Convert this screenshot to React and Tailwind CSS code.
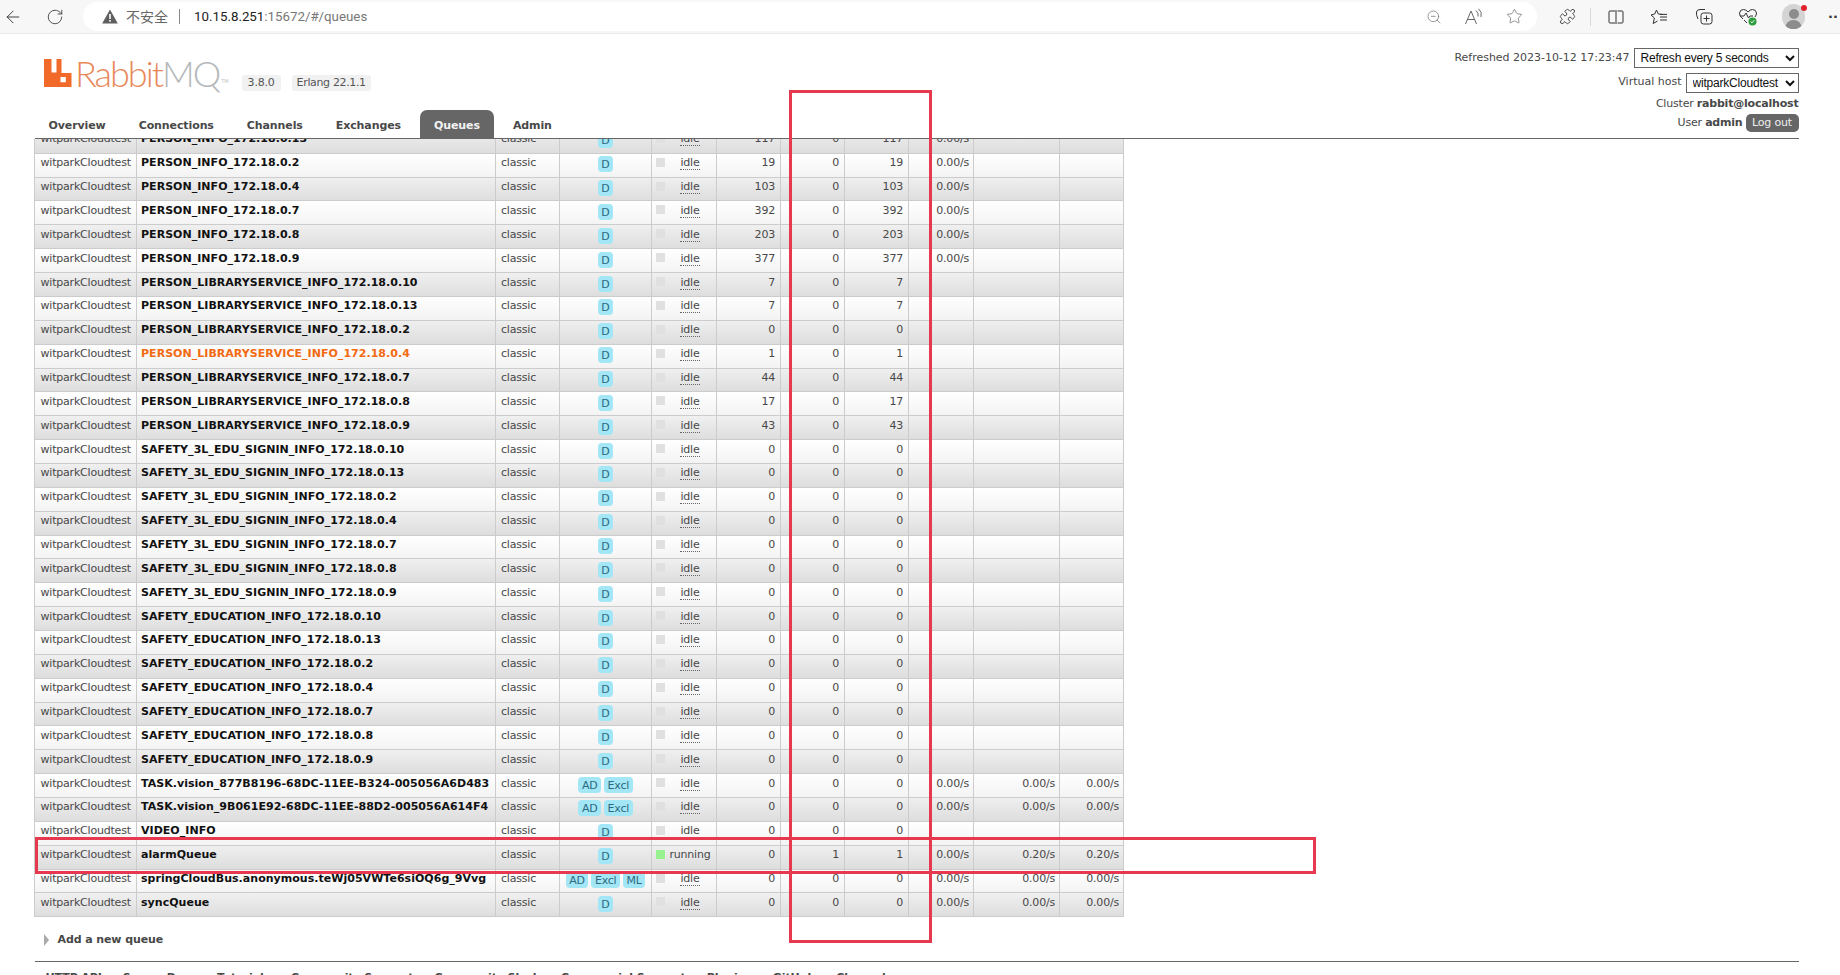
import React from "react";
import { ArrowLeft, RotateCw, ZoomOut, Star, Puzzle } from "lucide-react";

const P = "PERSON_INFO_172.18.0.";
const L = "PERSON_LIBRARYSERVICE_INFO_172.18.0.";
const S = "SAFETY_3L_EDU_SIGNIN_INFO_172.18.0.";
const E = "SAFETY_EDUCATION_INFO_172.18.0.";
const suf = ["10", "13", "2", "4", "7", "8", "9"];
const zero = (prefix) => suf.map((s) => ({ n: prefix + s, r: 0, u: 0, t: 0 }));
const libVals = [7, 7, 0, 1, 44, 17, 43];

const rate = ["0.00/s", "0.00/s", "0.00/s"];
const rows = [
  { n: P + "13", r: 117, u: 0, t: 117, a: ["0.00/s"] },
  { n: P + "2", r: 19, u: 0, t: 19, a: ["0.00/s"] },
  { n: P + "4", r: 103, u: 0, t: 103, a: ["0.00/s"] },
  { n: P + "7", r: 392, u: 0, t: 392, a: ["0.00/s"] },
  { n: P + "8", r: 203, u: 0, t: 203, a: ["0.00/s"] },
  { n: P + "9", r: 377, u: 0, t: 377, a: ["0.00/s"] },
  ...suf.map((s, i) => ({ n: L + s, r: libVals[i], u: 0, t: libVals[i], orange: s === "4" })),
  ...zero(S),
  ...zero(E),
  { n: "TASK.vision_877B8196-68DC-11EE-B324-005056A6D483", r: 0, u: 0, t: 0, f: ["AD", "Excl"], a: rate },
  { n: "TASK.vision_9B061E92-68DC-11EE-88D2-005056A614F4", r: 0, u: 0, t: 0, f: ["AD", "Excl"], a: rate },
  { n: "VIDEO_INFO", r: 0, u: 0, t: 0 },
  { n: "alarmQueue", r: 0, u: 1, t: 1, run: true, a: ["0.00/s", "0.20/s", "0.20/s"] },
  { n: "springCloudBus.anonymous.teWj05VWTe6siOQ6g_9Vvg", r: 0, u: 0, t: 0, f: ["AD", "Excl", "ML"], a: rate },
  { n: "syncQueue", r: 0, u: 0, t: 0, a: rate },
];

const tabs = ["Overview", "Connections", "Channels", "Exchanges", "Queues", "Admin"];
const foot = ["HTTP API", "Server Docs", "Tutorials", "Community Support", "Community Slack", "Commercial Support", "Plugins", "GitHub", "Changelog"];
const widths = [102, 359, 64, 92, 65, 64, 64, 64, 65, 86, 64];

const td = "border border-[#cccccc] align-top pt-[1.5px] leading-[15px] overflow-hidden whitespace-nowrap";

function Row({ q, i }) {
  const gray = i % 2 === 0;
  const a = q.a || [];
  return (
    <tr className={gray ? "h-[23.87px] bg-linear-to-b from-[#f0f0f0] to-[#dddddd]" : "h-[23.87px] bg-linear-to-b from-[#ffffff] to-[#f3f3f3]"}>
      <td className={td + " pl-[5.5px]"}>witparkCloudtest</td>
      <td className={td + " pl-[4px] font-bold tracking-[0.03px] " + (q.orange ? "text-[#f26a12]" : "text-[#111111]")}>{q.n}</td>
      <td className={td + " pl-[5px]"}>classic</td>
      <td className={td + " text-center"}>
        <div className="flex justify-center gap-[3px] pt-[1px]">
          {(q.f || ["D"]).map((f) => (
            <span key={f} className="rounded-[4px] bg-[#a3e6f6] px-[3.5px] h-[16px] leading-[17px] text-[#2d6a80]">{f}</span>
          ))}
        </div>
      </td>
      <td className={td}>
        <div className="flex items-start pl-[4px]">
          <span className={q.run ? "mt-[2.5px] w-[9px] h-[9px] bg-[#97f28f]" : "mt-[2.5px] w-[9px] h-[9px] bg-[#e0e0e0]"} />
          <span className="flex-1 text-center pr-[1px]">
            {q.run ? "running" : <span className="border-b border-dotted border-[#666666]">idle</span>}
          </span>
        </div>
      </td>
      <td className={td + " text-right pr-[5px]"}>{q.r}</td>
      <td className={td + " text-right pr-[5px]"}>{q.u}</td>
      <td className={td + " text-right pr-[5px]"}>{q.t}</td>
      <td className={td + " text-right pr-[4px]"}>{a[0]}</td>
      <td className={td + " text-right pr-[4px]"}>{a[1]}</td>
      <td className={td + " text-right pr-[4px]"}>{a[2]}</td>
    </tr>
  );
}

function Slot({ children, w = "w-[40px]" }) {
  return <div className={"flex items-center justify-center " + w}>{children}</div>;
}

function BrowserBar() {
  return (
    <div className="relative h-[34px] bg-[#f7f7f7] border-b border-[#ebebeb] flex items-center text-[#333333] tracking-normal">
      <Slot w="w-[25px]"><ArrowLeft size={20} strokeWidth={1.1} /></Slot>
      <Slot w="w-[36px] ml-[12px]"><RotateCw size={18} strokeWidth={1.1} /></Slot>
      <div className="ml-[10px] w-[1454px] h-[29px] bg-white rounded-full flex items-center pl-[19px] font-['Roboto',sans-serif]">
        <svg width="16" height="15" viewBox="0 0 16 15" className="shrink-0">
          <path d="M8 0.5 L15.8 14.5 H0.2 Z" fill="#5f5f5f" />
          <rect x="7.2" y="5" width="1.6" height="5" fill="#fff" />
          <rect x="7.2" y="11" width="1.6" height="1.7" fill="#fff" />
        </svg>
        <span className="ml-[8px] text-[14px] text-[#666666] font-['Noto_Sans_CJK_SC',sans-serif]">不安全</span>
        <span className="ml-[11px] w-px h-[15px] bg-[#888888]" />
        <span className="ml-[14px] text-[13.3px] text-[#222222]">10.15.8.251<span className="text-[#777777]">:15672/#/queues</span></span>
        <div className="ml-auto flex items-center pr-[3px] text-[#666666]">
          <Slot><ZoomOut size={16} strokeWidth={1} /></Slot>
          <Slot>
            <svg width="20" height="18" viewBox="0 0 20 18" fill="none" stroke="#666" strokeWidth="1">
              <path d="M1.5 16 L7 3 L12.5 16 M3.3 11.5 H10.7" />
              <path d="M12 2.5 Q15 5 14 8.5 M14.5 0.8 Q18.5 4 17 9" />
            </svg>
          </Slot>
          <Slot><Star size={17} strokeWidth={1} /></Slot>
        </div>
      </div>
      <div className="flex items-center ml-[11px] text-[#333333]">
        <Slot w="w-[38px]"><Puzzle size={17} strokeWidth={1.2} /></Slot>
        <span className="w-px h-[18px] bg-[#d8d8d8] mx-[4px]" />
        <Slot w="w-[42px]">
          <svg width="16" height="14" viewBox="0 0 16 14" fill="none" stroke="#333" strokeWidth="1">
            <path d="M7 1 H2 Q1 1 1 2 V12 Q1 13 2 13 H7 M9.5 1 H14 Q15 1 15 2 V12 Q15 13 14 13 H9.5 M8 0 V14" />
          </svg>
        </Slot>
        <Slot w="w-[44px]">
          <svg width="18" height="16" viewBox="0 0 18 16" fill="none" stroke="#333" strokeWidth="1">
            <path d="M6.5 1 L8.3 5 L12.5 5.4 M1 6 L4.4 9 L3.2 14.5 L7.5 12" />
            <path d="M6.5 1 L4.7 5 L1 6 M10 8 H17 M10 11 H17 M10 5.4 H17" />
          </svg>
        </Slot>
        <Slot w="w-[46px]">
          <svg width="18" height="17" viewBox="0 0 18 17" fill="none" stroke="#333" strokeWidth="1">
            <path d="M3 11 Q1 7 1.5 4 Q2 1.5 5 1.5 H10" />
            <rect x="6" y="5" width="11" height="11" rx="2.5" />
            <path d="M11.5 7.5 V13.5 M8.5 10.5 H14.5" />
          </svg>
        </Slot>
        <Slot w="w-[42px]">
          <svg width="20" height="18" viewBox="0 0 20 18" fill="none" stroke="#333" strokeWidth="1">
            <path d="M5 11 Q1 8 1.5 5 Q2 1.5 5.5 1.5 Q8 1.5 10 4 Q12 1.5 14.5 1.5 Q18 1.5 18.5 5 Q18.5 7 17 9" />
            <path d="M2 8 H6 L8 5 L10.5 10 L12 8 H15" />
            <path d="M6 12 L9 15" />
            <circle cx="14.5" cy="13.5" r="4" fill="#2e9e3f" stroke="none" />
            <path d="M12.7 13.5 L14 14.8 L16.3 12.3" stroke="#fff" />
          </svg>
        </Slot>
        <div className="ml-[13px] w-[23px] h-[25px] rounded-full bg-[#d4d4d4] overflow-hidden flex flex-col items-center pt-[5px]">
          <span className="w-[10px] h-[10px] rounded-full bg-[#8c8c8c]" />
          <span className="mt-[1px] w-[17px] h-[10px] rounded-t-full bg-[#8c8c8c]" />
        </div>
        <span className="absolute top-[4.5px] left-[1800.5px] w-[6px] h-[6px] rounded-full bg-[#e0202a]" />
        <span className="ml-[23px] text-[13px] font-bold text-[#333333] leading-none whitespace-nowrap">··</span>
      </div>
    </div>
  );
}

function Logo() {
  return (
    <div className="flex items-start tracking-normal">
      <svg width="28" height="28" viewBox="0 0 28 28" className="shrink-0 mt-[2px]">
        <path fillRule="evenodd" d="M0 0 H7.5 V13.5 H12.5 V0 H17.5 V14 H27.5 V28.5 H0 Z M16.5 18 V23.2 H21.8 V18 Z" fill="#f26a2a" />
      </svg>
      <div className="ml-[3px] -mt-[2px] h-[36px] leading-[36px] text-[36px] font-light tracking-[-2px] font-['Lato',sans-serif] text-[#e8885a] whitespace-nowrap">
        Rabbit<span className="text-[#b4b8bb]">MQ</span>
      </div>
      <span className="mt-[21px] ml-[2px] text-[5px] text-[#c0c0c0]">TM</span>
      <div className="mt-[18px] ml-[13px] flex gap-[11px] text-[#555555]">
        <span className="h-[16px] leading-[16px] px-[6px] bg-[#f1f1f1] rounded-[3px] tracking-[-0.2px]">3.8.0</span>
        <span className="h-[16px] leading-[16px] px-[5px] bg-[#f1f1f1] rounded-[3px] tracking-[-0.35px]">Erlang 22.1.1</span>
      </div>
    </div>
  );
}

export default function App() {
  return (
    <div className="relative w-[1840px] h-[975px] overflow-hidden bg-white text-[#484848] text-[11px] tracking-[-0.2px] font-['DejaVu_Sans',sans-serif]">
      <BrowserBar />
      <header className="ml-[34.5px] mr-[41.5px] h-[104.5px] border-b border-[#666666] flex justify-between">
        <div className="flex flex-col justify-between">
          <div className="pt-[23px] pl-[9.5px]"><Logo /></div>
          <nav className="flex gap-[5px] font-bold text-[#484848] tracking-[-0.1px]">
            {tabs.map((t) => (
              <span key={t} className={t === "Queues" ? "h-[28px] px-[14px] pt-[8px] leading-[15px] bg-[#666666] text-[#f2f2f2] rounded-t-[7px]" : "h-[28px] px-[14px] pt-[8px] leading-[15px]"}>{t}</span>
            ))}
          </nav>
        </div>
        <div className="flex flex-col items-end pt-[14px]">
          <div className="flex items-center gap-[4px] h-[20px]">
            <span className="tracking-[-0.02px]">Refreshed 2023-10-12 17:23:47</span>
            <select className="w-[165px] h-[20px] border border-[#666666] bg-white text-[12px] text-[#111111] pl-[2px] font-['Liberation_Sans',sans-serif]">
              <option>Refresh every 5 seconds</option>
            </select>
          </div>
          <div className="flex items-center gap-[4px] h-[20px] mt-[4.5px]">
            <span className="tracking-normal">Virtual host</span>
            <select className="w-[113px] h-[20px] border border-[#666666] bg-white text-[12px] text-[#111111] pl-[2px] font-['Liberation_Sans',sans-serif]">
              <option>witparkCloudtest</option>
            </select>
          </div>
          <div className="h-[15px] leading-[15px] mt-[3px]">Cluster <b>rabbit@localhost</b></div>
          <div className="flex items-center gap-[3px] mt-[3.5px]">
            <span>User <b>admin</b></span>
            <span className="h-[18px] w-[53px] leading-[18px] text-center rounded-[5px] bg-[#666666] text-[#eeeeee]">Log out</span>
          </div>
        </div>
      </header>
      <main className="ml-[34px] mr-[41.5px] h-[822.5px] overflow-hidden">
        <table className="table-fixed border-collapse w-[1089px] -mt-[9.6px]">
          <colgroup>
            {widths.map((w, i) => (
              <col key={i} style={{ width: w }} />
            ))}
          </colgroup>
          <tbody>
            {rows.map((q, i) => (
              <Row key={q.n} q={q} i={i} />
            ))}
          </tbody>
        </table>
        <div className="flex items-center mt-[15px] pl-[9.5px] font-bold h-[15px] tracking-[-0.1px]">
          <span className="w-0 h-0 border-y-[6px] border-y-transparent border-l-[5px] border-l-[#aaaaaa]" />
          <span className="ml-[9px]">Add a new queue</span>
        </div>
      </main>
      <footer className="ml-[34.5px] mr-[41.5px] border-t border-[#666666] pt-[7.5px] pl-[11px] flex gap-[21px] font-bold tracking-[-0.1px]">
        {foot.map((f) => (
          <span key={f}>{f}</span>
        ))}
      </footer>
      <div className="absolute left-[789px] top-[90px] w-[143px] h-[853px] border-[3px] border-[#e63950]" />
      <div className="absolute left-[35px] top-[837px] w-[1281px] h-[37px] border-[3px] border-[#e63950]" />
    </div>
  );
}
